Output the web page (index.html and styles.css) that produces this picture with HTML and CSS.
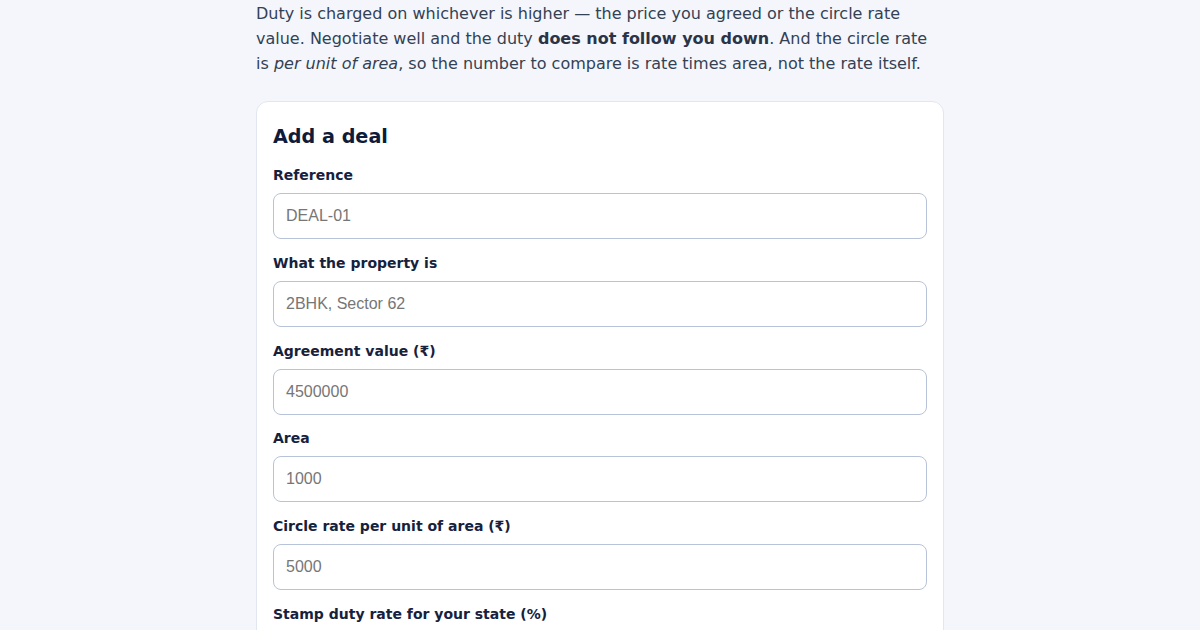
FILE: index.html
```html
<!DOCTYPE html>
<html lang="en">
<head>
<meta charset="utf-8">
<title>Add a deal</title>
<link rel="stylesheet" href="styles.css">
</head>
<body>
<main class="page">
  <p class="intro">Duty is charged on whichever is higher — the price you agreed or the circle rate value. Negotiate well and the duty <strong>does not follow you down</strong>. And the circle rate is <em>per unit of area</em>, so the number to compare is rate times area, not the rate itself.</p>
  <section class="card">
    <h2 class="card-title">Add a deal</h2>
    <div class="field">
      <label class="label" for="ref">Reference</label>
      <input class="input" id="ref" type="text" placeholder="DEAL-01">
    </div>
    <div class="field">
      <label class="label" for="prop">What the property is</label>
      <input class="input" id="prop" type="text" placeholder="2BHK, Sector 62">
    </div>
    <div class="field">
      <label class="label" for="agr">Agreement value (₹)</label>
      <input class="input" id="agr" type="text" placeholder="4500000">
    </div>
    <div class="field">
      <label class="label" for="area">Area</label>
      <input class="input" id="area" type="text" placeholder="1000">
    </div>
    <div class="field">
      <label class="label" for="circle">Circle rate per unit of area (₹)</label>
      <input class="input" id="circle" type="text" placeholder="5000">
    </div>
    <div class="field">
      <label class="label" for="duty">Stamp duty rate for your state (%)</label>
      <input class="input" id="duty" type="text" placeholder="6">
    </div>
  </section>
</main>
</body>
</html>
```

FILE: styles.css
```css
html, body {
  margin: 0;
  padding: 0;
}
body {
  background: #f4f6fb;
  font-family: "DejaVu Sans", sans-serif;
  color: #334155;
  overflow: hidden;
  height: 630px;
}
.page {
  width: 688px;
  margin: 0 auto;
  padding-top: 1px;
}
.intro {
  margin: 0 0 25px;
  font-size: 16px;
  line-height: 25px;
  color: #334155;
}
.intro strong {
  color: #2b3447;
}
.card {
  background: #ffffff;
  border: 1px solid #e2e6f0;
  border-radius: 12px;
  padding: 21px 16px 20px;
}
.card-title {
  margin: 0 0 14px;
  font-size: 19.2px;
  line-height: 28px;
  font-weight: 700;
  color: #0f1b3a;
}
.field {
  display: flex;
  flex-direction: column;
  gap: 7px;
  margin-bottom: 13.8px;
}
.label {
  font-size: 14px;
  line-height: 21px;
  font-weight: 700;
  color: #16213d;
}
.input {
  box-sizing: border-box;
  height: 46px;
  width: 100%;
  padding: 0 12px;
  border: 1px solid #b8c3da;
  border-radius: 8px;
  font-family: "Liberation Sans", Arial, sans-serif;
  font-size: 16px;
  color: #1e293b;
  background: #fff;
  outline: none;
}
.input::placeholder {
  color: #767676;
}
```
